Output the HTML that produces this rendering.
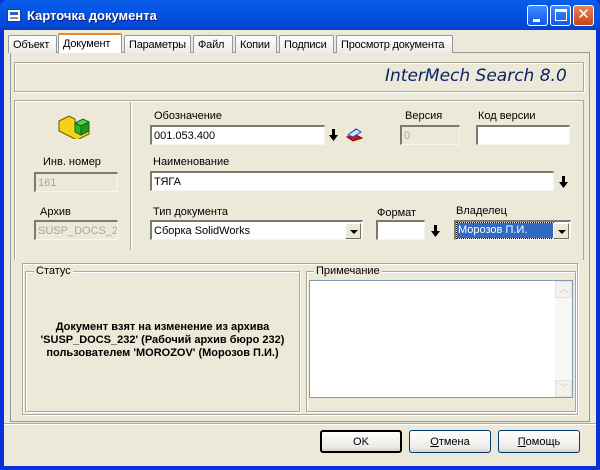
<!DOCTYPE html>
<html><head><meta charset="utf-8"><style>
*{box-sizing:border-box;margin:0;padding:0}
body{width:600px;height:470px;background:#0831D9;font-family:"Liberation Sans","DejaVu Sans",sans-serif;font-size:11px;color:#000;position:relative;overflow:hidden}
.a{position:absolute}
.win{left:4px;top:30px;width:592px;height:436px;background:#ECE9D8}
.title{left:0;top:0;width:600px;height:30px;background:linear-gradient(#0A5DE8,#0454E4 40%,#0348D8 85%,#0A3FC0);border-radius:7px 7px 0 0}
.tt{left:27px;top:8px;color:#fff;font-weight:bold;font-size:13px;text-shadow:1px 1px #0F1F6A}
.tb{top:5px;width:21px;height:21px;border:1px solid #fff;border-radius:3px;background:linear-gradient(#3D8BFE,#1558E8)}
.tab{top:35px;height:18px;border:1px solid #919B9C;border-bottom:none;background:linear-gradient(#fff,#ECEBE6);padding:3px 4px 0;border-radius:2px 2px 0 0;letter-spacing:-0.2px}
.panel{left:10px;top:52px;width:580px;height:370px;border:1px solid #919B9C;background:#ECE9D8}
.etch{border:1px solid #ACA899;box-shadow:1px 1px 0 #fff inset,1px 1px 0 #fff}
.sunk{background:#fff;border-top:2px solid #7B7A6F;border-left:2px solid #7B7A6F;border-right:1px solid #F6F5EF;border-bottom:1px solid #F6F5EF;padding:3px 2px 0;height:20px;white-space:nowrap;overflow:hidden}
.dis{background:#ECE9D8;color:#A9A695}
.dd{position:absolute;right:1px;top:1px;width:16px;height:16px;background:#ECE9D8;border:1px solid;border-color:#fff #716F64 #716F64 #fff}
.dd:after{content:"";position:absolute;left:4px;top:6px;border:4px solid transparent;border-top:4px solid #000;border-bottom:none}
.arr{width:9px;height:12px}
.btn{top:430px;height:23px;width:82px;border:1px solid #003C74;border-radius:3px;background:linear-gradient(#fff,#ECEBE6 80%,#D6D0C5);text-align:center;padding-top:5px}
</style></head><body>
<div class="a title"></div>
<div class="a" style="left:7px;top:9px;width:14px;height:13px;background:#fff;border:1px solid #1a3e8a"><div style="margin:2px;height:3px;background:#2b5fc4"></div><div style="margin:1px 2px;height:2px;background:#88a"></div></div>
<div class="a tt">Карточка документа</div>
<div class="a tb" style="left:527px"><div style="position:absolute;left:5px;top:13px;width:7px;height:3px;background:#fff"></div></div>
<div class="a tb" style="left:550px"><div style="position:absolute;left:4px;top:3px;width:12px;height:12px;border:1px solid #fff;border-top:3px solid #fff"></div></div>
<div class="a tb" style="left:573px;background:linear-gradient(#E7855C,#C84518);color:#fff;font-weight:bold;font-size:15px;text-align:center;line-height:18px">✕</div>
<div class="a win"></div>
<div class="a panel"></div>
<div class="a tab" style="left:8px;width:49px">Объект</div>
<div class="a tab" style="left:58px;top:33px;height:20px;width:64px;background:#fff;border-top:2px solid #E68B2C;padding-top:3px">Документ</div>
<div class="a tab" style="left:124px;width:67px">Параметры</div>
<div class="a tab" style="left:193px;width:40px">Файл</div>
<div class="a tab" style="left:235px;width:42px">Копии</div>
<div class="a tab" style="left:279px;width:55px">Подписи</div>
<div class="a tab" style="left:336px;width:117px">Просмотр документа</div>
<div class="a etch" style="left:14px;top:62px;width:570px;height:30px"></div>
<div class="a" style="left:385px;top:66px;font-style:italic;color:#0A246A;font-size:17px;font-family:'DejaVu Sans',sans-serif">InterMech Search 8.0</div>
<div class="a etch" style="left:14px;top:100px;width:570px;height:160px;border-bottom:none;box-shadow:1px 1px 0 #fff inset"></div>
<div class="a" style="left:130px;top:102px;width:2px;height:148px;border-left:1px solid #ACA899;border-right:1px solid #fff"></div>
<svg class="a" style="left:57px;top:115px" width="34" height="24" viewBox="0 0 34 24"><path d="M2 6l10-5 6 3v8l8-4 6 3v8l-12 6-18-9z" fill="#F5D21A" stroke="#6b5200"/><path d="M18 8l8-4 6 3-8 4z" fill="#4CD54C" stroke="#1b5e1b"/><path d="M24 11l8-4v9l-8 4z" fill="#179A17" stroke="#1b5e1b"/><path d="M18 8l6 3v9l-6-3z" fill="#2EB42E" stroke="#1b5e1b"/></svg>
<div class="a" style="left:43px;top:156px">Инв. номер</div>
<div class="a sunk dis" style="left:34px;top:172px;width:84px">161</div>
<div class="a" style="left:40px;top:206px">Архив</div>
<div class="a sunk dis" style="left:34px;top:220px;width:84px">SUSP_DOCS_2</div>
<div class="a" style="left:154px;top:110px">Обозначение</div>
<div class="a sunk" style="left:150px;top:125px;width:175px">001.053.400</div>
<svg class="a arr" style="left:329px;top:129px" viewBox="0 0 9 12"><path d="M3 0h3v6h3l-4.5 6L0 6h3z"/></svg>
<svg class="a" style="left:345px;top:127px" width="18" height="16" viewBox="0 0 18 16"><path d="M2 10l9-2 6 3-9 3z" fill="#E01010" stroke="#800"/><path d="M3 8l8-6 5 3-8 5z" fill="#cfe3ff" stroke="#2452b0"/><path d="M5 6l7-4" stroke="#2452b0"/></svg>
<div class="a" style="left:405px;top:110px">Версия</div>
<div class="a sunk dis" style="left:400px;top:125px;width:60px">0</div>
<div class="a" style="left:478px;top:110px">Код версии</div>
<div class="a sunk" style="left:476px;top:125px;width:94px"></div>
<div class="a" style="left:153px;top:156px">Наименование</div>
<div class="a sunk" style="left:150px;top:171px;width:404px">ТЯГА</div>
<svg class="a arr" style="left:559px;top:176px" viewBox="0 0 9 12"><path d="M3 0h3v6h3l-4.5 6L0 6h3z"/></svg>
<div class="a" style="left:153px;top:206px">Тип документа</div>
<div class="a sunk" style="left:150px;top:220px;width:213px">Сборка SolidWorks<div class="dd"></div></div>
<div class="a" style="left:377px;top:207px">Формат</div>
<div class="a sunk" style="left:376px;top:220px;width:49px"></div>
<svg class="a arr" style="left:431px;top:225px" viewBox="0 0 9 12"><path d="M3 0h3v6h3l-4.5 6L0 6h3z"/></svg>
<div class="a" style="left:456px;top:205px">Владелец</div>
<div class="a sunk" style="left:454px;top:220px;width:117px;padding:1px 1px"><span style="display:inline-block;background:#316AC5;color:#fff;width:96px;height:15px;padding:1px 0 0 1px;outline:1px dotted #000">Морозов П.И.</span><div class="dd"></div></div>
<div class="a etch" style="left:22px;top:263px;width:556px;height:152px"></div>
<div class="a etch" style="left:25px;top:271px;width:275px;height:141px"></div>
<div class="a" style="left:34px;top:265px;background:#ECE9D8;padding:0 2px">Статус</div>
<div class="a" style="left:27px;top:321px;width:271px;text-align:center;font-weight:bold;line-height:13px">Документ взят на изменение из архива<br>'SUSP_DOCS_232' (Рабочий архив бюро 232)<br>пользователем 'MOROZOV' (Морозов П.И.)</div>
<div class="a etch" style="left:306px;top:271px;width:270px;height:141px"></div>
<div class="a" style="left:314px;top:265px;background:#ECE9D8;padding:0 2px">Примечание</div>
<div class="a" style="left:309px;top:280px;width:264px;height:118px;background:#fff;border:1px solid #7F9DB9"></div>
<div class="a" style="left:555px;top:281px;width:17px;height:116px;background:#F7F7F3"><div style="height:17px;border:1px solid #E3E2DA;background:#F3F2EC;color:#C9C7BA;text-align:center;font-size:9px">︿</div><div style="position:absolute;bottom:0;width:17px;height:17px;border:1px solid #E3E2DA;background:#F3F2EC;color:#C9C7BA;text-align:center;font-size:9px">﹀</div></div>
<div class="a" style="left:4px;top:423px;width:592px;height:2px;border-top:1px solid #ACA899;border-bottom:1px solid #fff"></div>
<div class="a btn" style="left:320px;border:2px solid #000;padding-top:4px">OK</div>
<div class="a btn" style="left:409px"><u>О</u>тмена</div>
<div class="a btn" style="left:498px"><u>П</u>омощь</div>
</body></html>
